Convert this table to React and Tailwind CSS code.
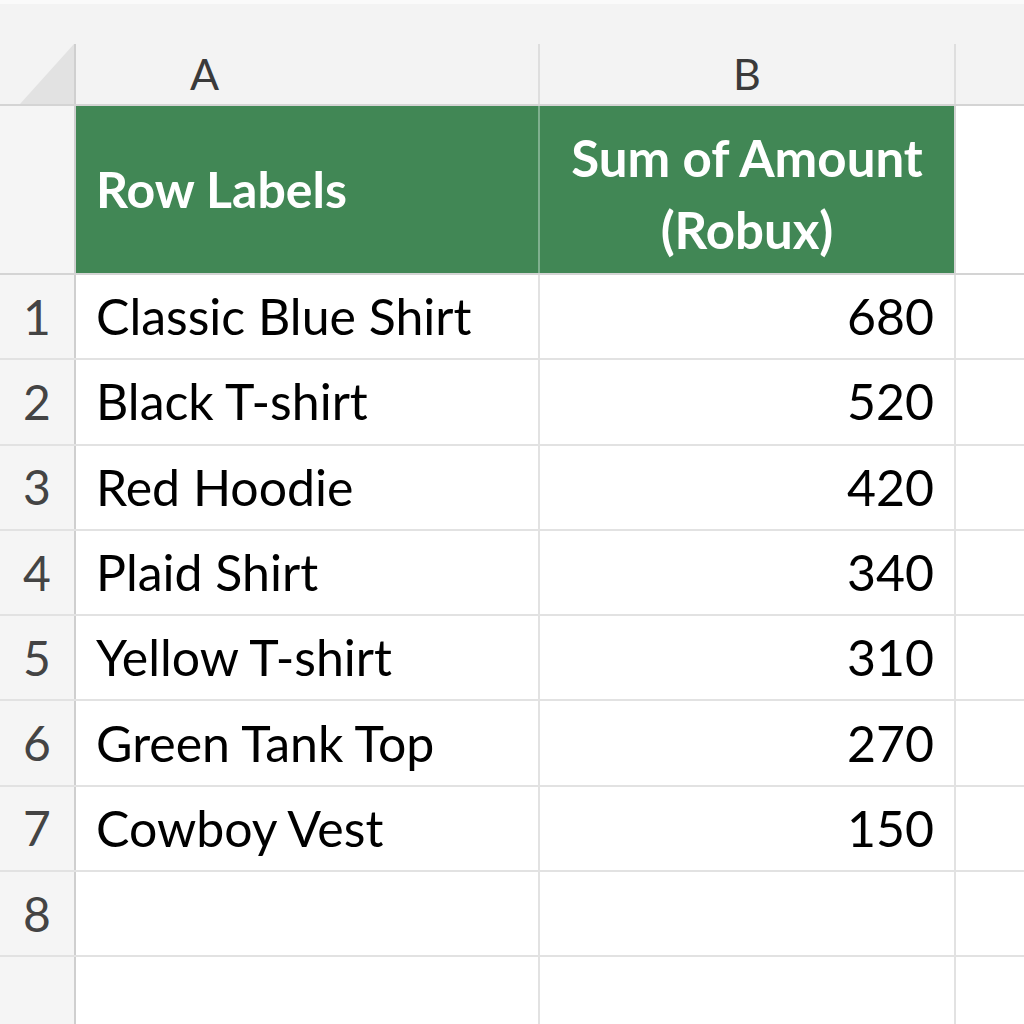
import React from "react";

const rows = [
  ["Classic Blue Shirt", "680"],
  ["Black T-shirt", "520"],
  ["Red Hoodie", "420"],
  ["Plaid Shirt", "340"],
  ["Yellow T-shirt", "310"],
  ["Green Tank Top", "270"],
  ["Cowboy Vest", "150"],
  ["", ""],
  ["", ""],
];

export default function App() {
  const font = { fontFamily: 'Lato, "Noto Sans", sans-serif' };
  return (
    <div className="w-[1024px] h-[1024px] overflow-hidden bg-white" style={font}>
      <div className="h-[4px] bg-[#fafafa]" />
      <div className="h-[40px] bg-[#f3f3f3]" />
      {/* column header */}
      <div className="flex h-[62px] bg-[#f3f3f3] border-b-2 border-[#d4d4d4]">
        <div className="w-[76px] relative border-r-2 border-[#cfcfcf]">
          <svg className="absolute left-0 top-0" width="74" height="60" viewBox="0 0 74 60">
            <polygon points="74,0 74,60 20,60" fill="#e2e2e2" />
          </svg>
        </div>
        <div className="w-[464px] flex items-center pl-[114px] text-[43px] text-[#3a3a3a] border-r-2 border-[#dedede]">A</div>
        <div className="w-[416px] flex items-center justify-center text-[43px] text-[#3a3a3a] border-r-2 border-[#dedede]">B</div>
        <div className="flex-1" />
      </div>
      {/* green header */}
      <div className="flex h-[169px] border-b-2 border-[#d4d4d4]">
        <div className="w-[76px] bg-[#f5f5f5] border-r-2 border-[#cfcfcf]" />
        <div className="w-[464px] bg-[#418755] border-r-2 border-[#7fb08f] flex items-center pl-[20px] text-white font-bold text-[50px]">
          Row Labels
        </div>
        <div className="w-[416px] bg-[#418755] border-r-2 border-[#d4d4d4] flex items-center justify-center pt-[8px] text-center text-white font-bold text-[51px] leading-[72px]">
          Sum of Amount
          <br />
          (Robux)
        </div>
        <div className="flex-1" />
      </div>
      {rows.map(([label, amt], i) => (
        <div key={i} className="flex h-[85.3px] border-b-2 border-[#e2e2e2]">
          <div className="w-[76px] bg-[#f5f5f5] border-r-2 border-[#cfcfcf] flex items-center justify-center text-[48px] text-[#444]">
            {i < 8 ? i + 1 : ""}
          </div>
          <div className="w-[464px] border-r-2 border-[#e2e2e2] flex items-center pl-[20px] text-[50px] text-black">
            {label}
          </div>
          <div className="w-[416px] border-r-2 border-[#e2e2e2] flex items-center justify-end pr-[20px] text-[50px] text-black">
            {amt}
          </div>
          <div className="flex-1" />
        </div>
      ))}
    </div>
  );
}
